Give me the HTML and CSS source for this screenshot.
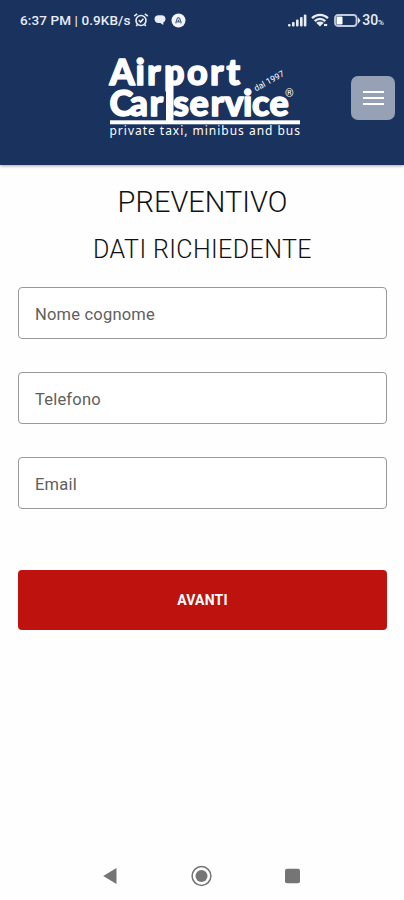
FILE: index.html
```
<!DOCTYPE html>
<html lang="it">
<head>
    <meta charset="UTF-8">
    <meta name="viewport" content="width=device-width, initial-scale=1.0">
    <title>Airport Carservice - Preventivo</title>
    <link rel="stylesheet" href="styles.css">
</head>
<body>
    <div class="app">
        <header class="header">
            <div class="status-bar">
                <div class="status-left">
                    <span class="status-time">6:37 PM | 0.9KB/s</span>
                    <svg class="alarm" width="16" height="16" viewBox="0 0 16 16" fill="none" stroke="#e8ecf4" stroke-width="1.6">
                        <circle cx="8" cy="8.5" r="5"/>
                        <path d="M1.2 4.2 4.2 1.8M14.8 4.2 11.8 1.8M5.8 8.2l1.8 1.8 2.8-3.2M4.4 12.5l-1.2 1.6M11.6 12.5l1.2 1.6"/>
                    </svg>
                    <svg class="chat" width="12" height="12" viewBox="0 0 12 12" fill="#e8ecf4">
                        <path d="M4.500 1.200h3.200c2.200 0 3.800 1.500 3.800 3.600 0 2-.8 2.900-2 3.500L9.200 11 6.400 9H4.300C2 9 .5 7.200.5 5s1.700-3.800 4-3.800z"/>
                    </svg>
                    <svg class="badge" width="15" height="15" viewBox="0 0 15 15">
                        <circle cx="7.5" cy="7.5" r="7" fill="#f2f4f9"/>
                        <path d="M4.800 10.300C5.400 7.500 6.200 4.700 7.500 4.700s2.100 2.800 2.700 5.600M6.500 9.500l1-2 1 2" fill="none" stroke="#4a5c84" stroke-width="1.2"/>
                    </svg>
                </div>
                <div class="status-right">
                    <svg class="signal" width="19" height="13" viewBox="0 0 19 13" fill="#e8ecf4">
                        <rect x="0" y="10" width="2.6" height="2.5" rx="1"/>
                        <rect x="4" y="8" width="2.6" height="4.5" rx="1"/>
                        <rect x="8" y="5.5" width="2.6" height="7" rx="1"/>
                        <rect x="12" y="3" width="2.6" height="9.5" rx="1"/>
                        <rect x="15.8" y="0.5" width="2.6" height="12" rx="1"/>
                    </svg>
                    <svg class="wifi" width="18" height="14" viewBox="0 0 18 14" fill="none" stroke="#e8ecf4" stroke-width="2.3">
                        <path d="M1 5.200c4.600-4.400 11.400-4.400 16 0M3.700 8.200c3.200-3 7.400-3 10.600 0"/>
                        <path d="M5.200 9.800c2.300-1.700 5.300-1.700 7.600 0L9 13.500z" fill="#e8ecf4" stroke="none"/>
                        <path d="M13 12h3.200" stroke-width="2.2"/>
                    </svg>
                    <svg class="battery" width="27" height="13" viewBox="0 0 27 13">
                        <rect x="1" y="1" width="21.5" height="11" rx="3" fill="none" stroke="#c3cbdc" stroke-width="1.8"/>
                        <rect x="2.5" y="2.5" width="6" height="8" rx="1" fill="#fff"/>
                        <path d="M23.800 3 26.500 6.500 23.800 10z" fill="#e8ecf4"/>
                    </svg>
                    <span class="level">30<small>%</small></span>
                </div>
            </div>

            <svg class="logo" width="210" height="100" viewBox="100 45 210 100" fill="#fff">
                <g class="logo-name">
                    <text x="109.500 135.500 147 164 187 210 226.500" y="84.500">Airport</text>
                    <text x="109.500 129.500 149.500" y="115.500">Car</text>
                    <text x="173 189.500 210.500 224.500 243 252 269.500" y="115.500">service</text>
                </g>
                <!-- long leg of the p, down to the rule -->
                <rect x="166" y="67" width="7.5" height="54"/>
                <rect x="110" y="120.3" width="190" height="4"/>
                <text class="logo-since" transform="translate(256 91.500) rotate(-29)" textLength="33">dal 1997</text>
                <text class="logo-reg" x="285" y="97">®</text>
                <text class="logo-tag" x="109.5" y="135.3" textLength="190.5">private taxi, minibus and bus</text>
            </svg>

            <button class="menu" aria-label="Menu">
                <span></span>
                <span></span>
                <span></span>
            </button>
        </header>

        <main class="content">
            <h1>PREVENTIVO</h1>
            <h2>DATI RICHIEDENTE</h2>
            <form class="form">
                <input type="text" placeholder="Nome cognome">
                <input type="text" placeholder="Telefono">
                <input type="text" placeholder="Email">
                <button class="submit" type="button">AVANTI</button>
            </form>
        </main>

        <nav class="nav-bar">
            <svg width="22" height="22" viewBox="0 0 22 22" fill="#757575">
                <path d="M3.200 11 16.500 3v16z"/>
            </svg>
            <svg width="22" height="22" viewBox="0 0 22 22">
                <circle cx="10.5" cy="11" r="9.4" fill="none" stroke="#757575" stroke-width="1.5"/>
                <circle cx="10.5" cy="11" r="6" fill="#757575"/>
            </svg>
            <svg width="22" height="22" viewBox="0 0 22 22" fill="#757575">
                <rect x="3" y="3.7" width="15" height="14.6" rx="2"/>
            </svg>
        </nav>
    </div>
</body>
</html>
```
FILE: styles.css
```
* {
    box-sizing: border-box;
}

body {
    margin: 0;
    background-color: #fefefe;
    font-family: Roboto, "Liberation Sans", sans-serif;
}

.app {
    display: flex;
    flex-direction: column;
    height: 900px;
}

.header {
    position: relative;
    height: 165px;
    background-color: #19325e;
    box-shadow: 0 1px 3px rgba(0, 0, 0, 0.35);
}

.status-bar {
    display: flex;
    justify-content: space-between;
    height: 40px;
    padding: 0 20px;
    color: #e8ecf4;
    font-size: 13.5px;
    font-weight: 500;
}

.status-left,
.status-right {
    display: flex;
    align-items: center;
}

.status-time {
    width: 111px;
    letter-spacing: 0.1px;
    white-space: nowrap;
}

.alarm {
    margin-left: 2px;
}

.chat {
    margin-left: 5px;
}

.badge {
    margin-left: 5px;
}

.wifi {
    margin-left: 4px;
}

.battery {
    margin-left: 5px;
}

.level {
    margin-left: 1px;
    font-size: 14px;
}

.level small {
    font-size: 8px;
}

.logo {
    display: block;
    margin: 5px 0 0 100px;
}

.logo-name {
    font-family: Lato, sans-serif;
    font-size: 36px;
    font-weight: 900;
    stroke: #fff;
    stroke-width: 1.4px;
    stroke-linejoin: round;
}

.logo-since {
    font-size: 8.5px;
}

.logo-reg {
    font-size: 11px;
}

.logo-tag {
    font-family: "Noto Sans", sans-serif;
    font-size: 12px;
}

.menu {
    position: absolute;
    top: 76px;
    right: 9px;
    display: flex;
    flex-direction: column;
    align-items: center;
    justify-content: center;
    gap: 4px;
    width: 44px;
    height: 44px;
    padding: 0 0 1px;
    border: 0;
    border-radius: 7px;
    background-color: #97a1b5;
}

.menu span {
    width: 21px;
    height: 2px;
    background-color: #fff;
}

.content {
    flex: 1;
    padding: 19px 17px 0 18px;
    color: #111;
}

h1,
h2 {
    margin: 0;
    font-weight: 300;
    text-align: center;
}

h1 {
    font-size: 29px;
    line-height: 36px;
}

h2 {
    margin-top: 13px;
    font-size: 25px;
    line-height: 34px;
    letter-spacing: 0.4px;
}

.form {
    display: flex;
    flex-direction: column;
    gap: 33px;
    margin-top: 20px;
}

.form input {
    height: 52px;
    padding: 3px 16px 0;
    border: 1px solid #999;
    border-radius: 4px;
    background-color: #fff;
    font-family: inherit;
    font-size: 16.5px;
    letter-spacing: 0.2px;
}

.form input::placeholder {
    color: #606060;
    opacity: 1;
}

.submit {
    height: 60px;
    margin-top: 28px;
    border: 0;
    border-radius: 4px;
    background-color: #bd120d;
    color: #fff;
    font-family: inherit;
    font-size: 14px;
    font-weight: 700;
    letter-spacing: 0.2px;
}

.nav-bar {
    display: flex;
    justify-content: space-between;
    height: 35px;
    padding: 0 100px;
}
```
